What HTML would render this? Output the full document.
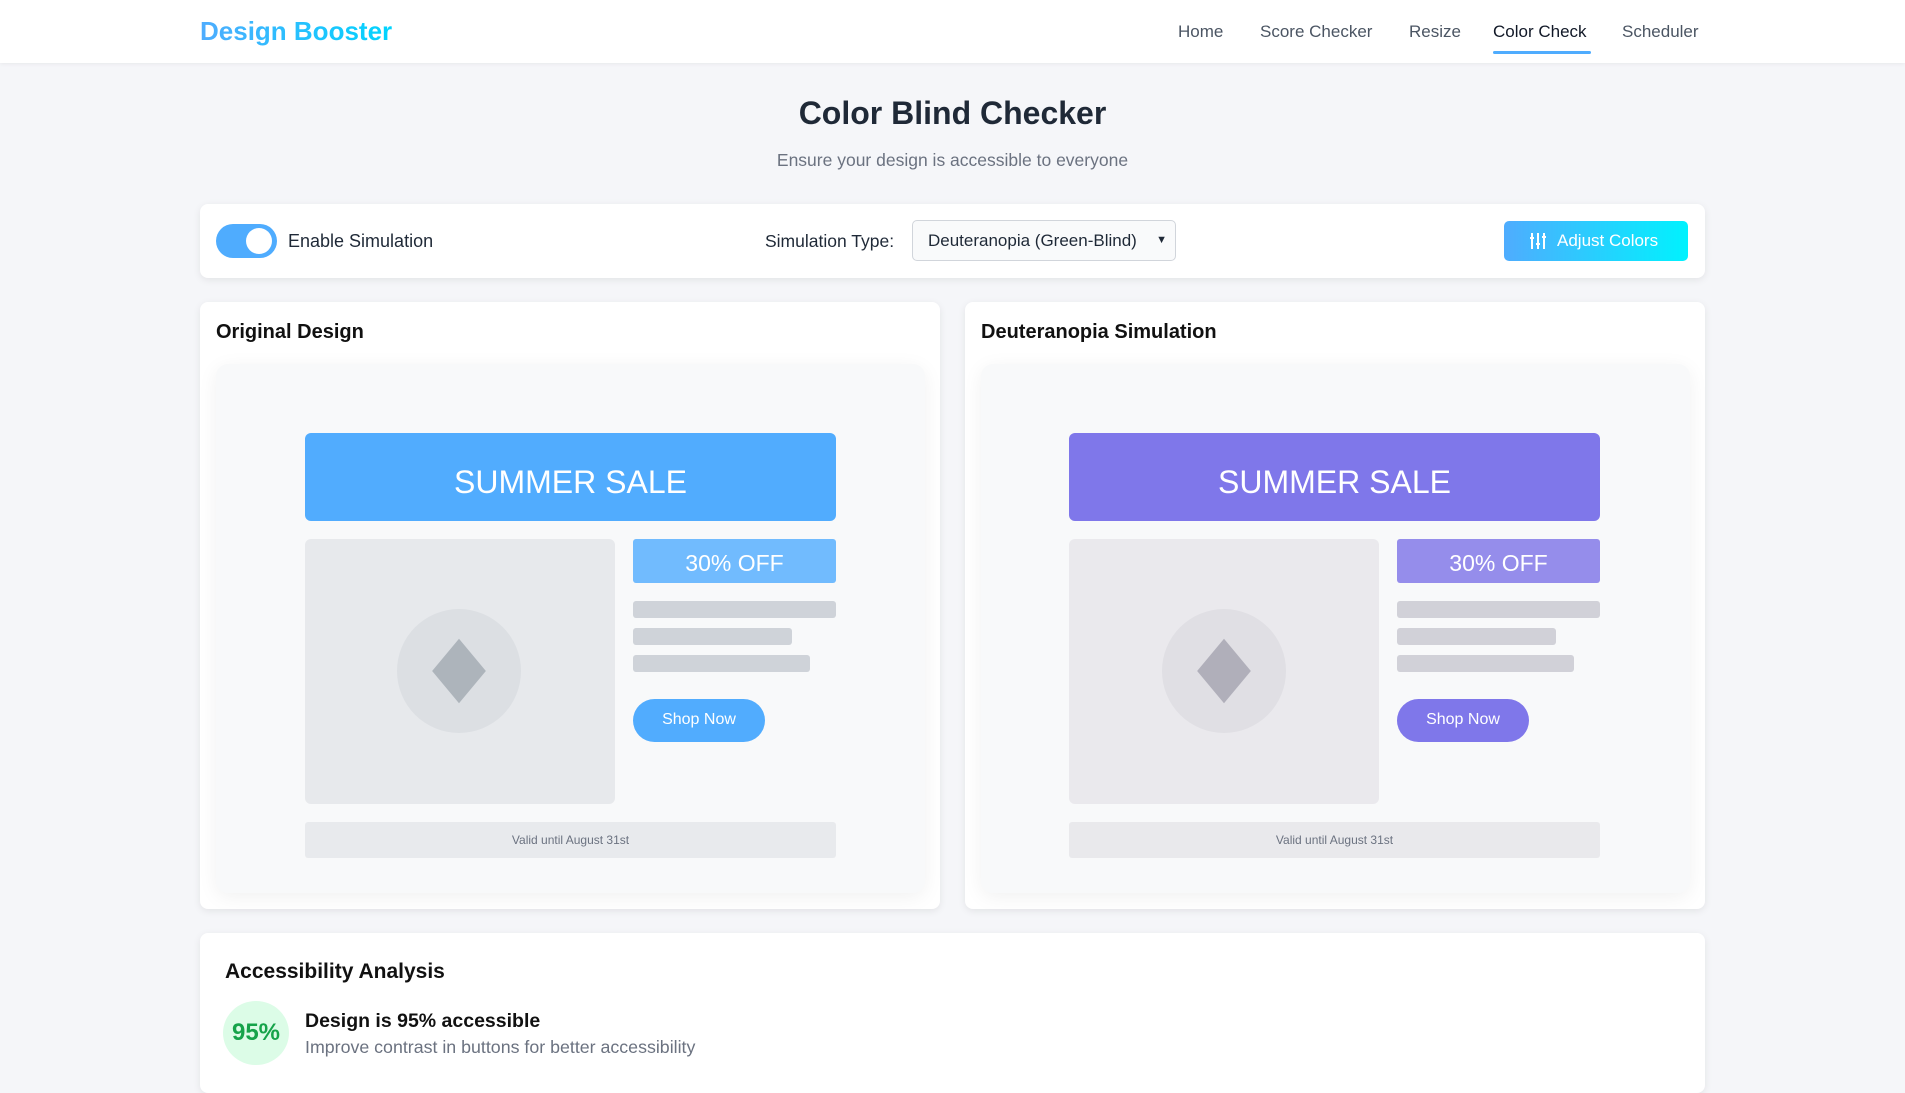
<!DOCTYPE html>
<html><head><meta charset="utf-8"><style>
*{margin:0;padding:0;box-sizing:border-box}
body{width:1905px;height:1079px;overflow:hidden;background:#f5f6f9;font-family:"Liberation Sans",sans-serif;position:relative;color:#1f2937}
.a{position:absolute}
.nav{left:0;top:0;width:1905px;height:63px;background:#fff;box-shadow:0 1px 4px rgba(0,0,0,.06)}
.logo{left:200px;top:16px;font-size:26px;font-weight:bold;background:linear-gradient(90deg,#4facfe,#00d4fe);-webkit-background-clip:text;color:transparent}
.ni{top:22px;font-size:17px;color:#4b5563}
.card{background:#fff;border-radius:8px;box-shadow:0 2px 8px rgba(0,0,0,.08)}
.pv{background:#f8f9fa;border-radius:12px;box-shadow:0 4px 20px rgba(0,0,0,.06)}
.ban{height:88px;border-radius:6px;color:#fff;font-size:32px;text-align:center;line-height:98px}
.img{border-radius:6px}
.ln{height:17px;border-radius:3px}
.off{height:44px;border-radius:3px;color:#fff;font-size:23px;text-align:center;line-height:48px}
.shop{width:132px;height:43px;border-radius:22px;color:#fff;font-size:16px;text-align:center;line-height:42px}
.valid{height:36px;background:#e8eaed;border-radius:3px;font-size:12px;color:#6b7280;text-align:center;line-height:36px}
</style></head><body>
<div class="a nav"></div>
<div class="a logo">Design Booster</div>
<div class="a ni" style="left:1178px">Home</div>
<div class="a ni" style="left:1260px">Score Checker</div>
<div class="a ni" style="left:1409px">Resize</div>
<div class="a ni" style="left:1493px;color:#111827">Color Check</div>
<div class="a" style="left:1493px;top:51px;width:98px;height:3px;background:#4facfe;border-radius:2px"></div>
<div class="a ni" style="left:1622px">Scheduler</div>

<div class="a" style="left:0;width:1905px;top:95px;text-align:center;font-size:32px;font-weight:bold;color:#1f2937">Color Blind Checker</div>
<div class="a" style="left:0;width:1905px;top:150px;text-align:center;font-size:17.5px;color:#6b7280">Ensure your design is accessible to everyone</div>

<div class="a card" style="left:200px;top:204px;width:1505px;height:74px"></div>
<div class="a" style="left:216px;top:224px;width:61px;height:34px;border-radius:17px;background:#4facfe"></div>
<div class="a" style="left:246px;top:228px;width:26px;height:26px;border-radius:50%;background:#fff"></div>
<div class="a" style="left:288px;top:231px;font-size:18px;color:#1f2937">Enable Simulation</div>
<div class="a" style="left:765px;top:231px;font-size:17.5px;color:#1f2937">Simulation Type:</div>
<div class="a" style="left:912px;top:220px;width:264px;height:41px;border:1px solid #d1d5db;border-radius:5px;background:#f9fafb;font-size:17px;line-height:39px;padding-left:15px;color:#1f2937">Deuteranopia (Green-Blind)<span style="position:absolute;right:8px;font-size:11px">&#9660;</span></div>
<div class="a" style="left:1504px;top:221px;width:184px;height:40px;border-radius:5px;background:linear-gradient(90deg,#4facfe,#00f2fe);color:#fff;font-size:17px;line-height:40px;padding-left:53px">Adjust Colors</div>
<svg class="a" style="left:1529px;top:232px" width="18" height="18" viewBox="0 0 18 18" stroke="#fff" stroke-width="2" fill="none"><path d="M3 1v16M9 1v16M15 1v16M1 6h4M7 12h4M13 5h4"/></svg>

<div class="a card" style="left:200px;top:302px;width:740px;height:607px"></div>
<div class="a" style="left:216px;top:321px;font-size:20px;font-weight:bold;color:#111">Original Design</div>
<div class="a pv" style="left:216px;top:364px;width:709px;height:529px"></div>
<div class="a ban" style="left:305px;top:433px;width:531px;background:#51acfe">SUMMER SALE</div>
<div class="a img" style="left:305px;top:539px;width:310px;height:265px;background:#e7e9ec"></div>
<div class="a" style="left:397px;top:609px;width:124px;height:124px;border-radius:50%;background:#dcdfe3"></div>
<div class="a" style="left:440px;top:652px;width:38px;height:38px;background:#adb4bb;transform:scaleY(1.2) rotate(45deg)"></div>
<div class="a off" style="left:633px;top:539px;width:203px;background:#71bbfe">30% OFF</div>
<div class="a ln" style="left:633px;top:601px;width:203px;background:#cfd3d9"></div>
<div class="a ln" style="left:633px;top:628px;width:159px;background:#cfd3d9"></div>
<div class="a ln" style="left:633px;top:655px;width:177px;background:#cfd3d9"></div>
<div class="a shop" style="left:633px;top:699px;background:#51acfe">Shop Now</div>
<div class="a valid" style="left:305px;top:822px;width:531px">Valid until August 31st</div>

<div class="a card" style="left:965px;top:302px;width:740px;height:607px"></div>
<div class="a" style="left:981px;top:321px;font-size:20px;font-weight:bold;color:#111">Deuteranopia Simulation</div>
<div class="a pv" style="left:981px;top:364px;width:709px;height:529px"></div>
<div class="a ban" style="left:1069px;top:433px;width:531px;background:#7f77ea">SUMMER SALE</div>
<div class="a img" style="left:1069px;top:539px;width:310px;height:265px;background:#eae9ed"></div>
<div class="a" style="left:1162px;top:609px;width:124px;height:124px;border-radius:50%;background:#e0dfe4"></div>
<div class="a" style="left:1205px;top:652px;width:38px;height:38px;background:#b0afba;transform:scaleY(1.2) rotate(45deg)"></div>
<div class="a off" style="left:1397px;top:539px;width:203px;background:#958deb">30% OFF</div>
<div class="a ln" style="left:1397px;top:601px;width:203px;background:#d1d1d8"></div>
<div class="a ln" style="left:1397px;top:628px;width:159px;background:#d1d1d8"></div>
<div class="a ln" style="left:1397px;top:655px;width:177px;background:#d1d1d8"></div>
<div class="a shop" style="left:1397px;top:699px;background:#7f77ea">Shop Now</div>
<div class="a valid" style="left:1069px;top:822px;width:531px;background:#e9e9ec">Valid until August 31st</div>

<div class="a card" style="left:200px;top:933px;width:1505px;height:160px"></div>
<div class="a" style="left:225px;top:960px;font-size:21px;font-weight:bold;color:#111">Accessibility Analysis</div>
<div class="a" style="left:223px;top:1001px;width:66px;height:64px;border-radius:50%;background:#dcfce7;color:#16a34a;font-size:24px;font-weight:bold;text-align:center;line-height:64px">95%</div>
<div class="a" style="left:305px;top:1010px;font-size:19.5px;font-weight:bold;color:#111">Design is 95% accessible</div>
<div class="a" style="left:305px;top:1037px;font-size:17.8px;color:#6b7280">Improve contrast in buttons for better accessibility</div>
</body></html>
